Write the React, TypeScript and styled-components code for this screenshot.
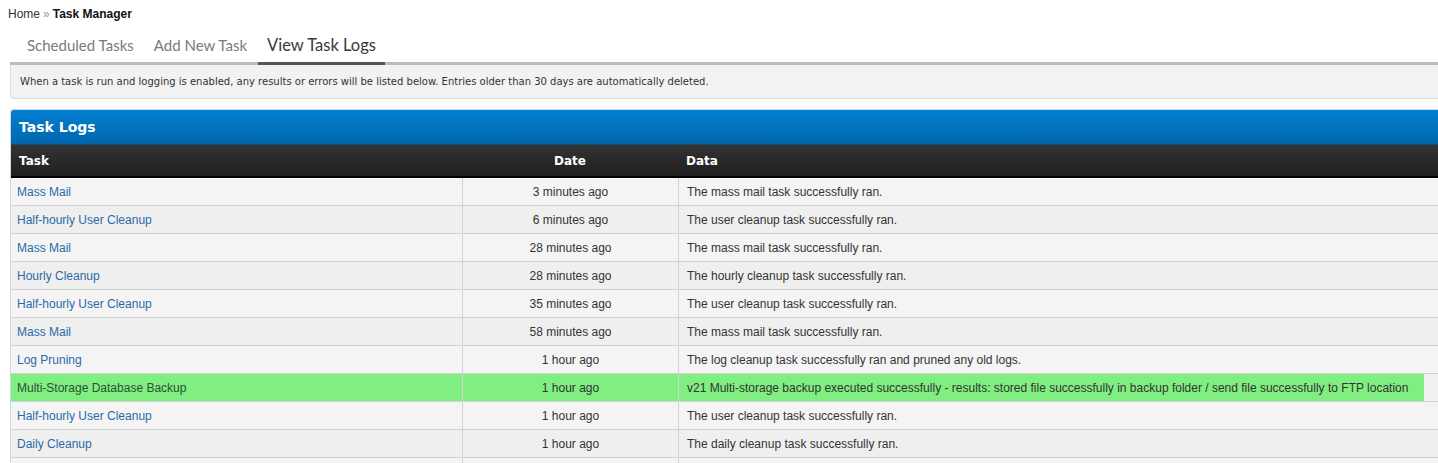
import React from "react";
import styled, { createGlobalStyle } from "styled-components";

const Global = createGlobalStyle`
  html, body { margin: 0; padding: 0; background: #fff; overflow: hidden; }
  body { font-family: "Liberation Sans", Arial, sans-serif; }
`;

const Page = styled.div`
  width: 1460px;
  padding: 7px 0 0 8px;
  box-sizing: border-box;
`;

const Breadcrumb = styled.div`
  font-size: 12px;
  color: #333;
  line-height: 15px;
  b { color: #111; }
`;

const Sep = styled.span`
  color: #999;
  margin: 0 3px;
`;

const Tabs = styled.div`
  display: flex;
  align-items: flex-end;
  margin: 12px 0 0 2px;
  border-bottom: 3px solid #bbb;
  padding-left: 8px;
`;

const Tab = styled.div<{ $active?: boolean }>`
  font-family: Lato, "Open Sans", sans-serif;
  font-size: ${(p) => (p.$active ? "16.5px" : "15px")};
  line-height: 20px;
  padding: 1px 9px 7px 9px;
  margin-right: 2px;
  color: ${(p) => (p.$active ? "#3a3a3a" : "#7a7a7a")};
  margin-bottom: -3px;
  border-bottom: 3px solid ${(p) => (p.$active ? "#555" : "transparent")};
`;

const Info = styled.div`
  margin: 0 0 10px 2px;
  height: 33px;
  background: #f2f2f2;
  border: 1px solid #dcdcdc;
  border-top: none;
  border-radius: 0 0 4px 4px;
  display: flex;
  align-items: center;
  padding-left: 9px;
  font-family: "DejaVu Sans", Verdana, sans-serif;
  font-size: 10px;
  color: #333;
`;

const Panel = styled.div`
  margin-left: 2px;
  border: 1px solid #c8d9e8;
  border-right: none;
  border-bottom: none;
  border-radius: 4px 0 0 0;
  overflow: hidden;
`;

const PanelTitle = styled.div`
  height: 34px;
  display: flex;
  align-items: center;
  padding-left: 8px;
  background: linear-gradient(#0180d2, #0166ad);
  border-bottom: 1px solid #1d4a66;
  color: #fff;
  font-family: "DejaVu Sans", Verdana, sans-serif;
  font-weight: bold;
  font-size: 14px;
`;

const Grid = styled.div`
  display: grid;
  grid-template-columns: 451px 216px 1fr;
`;

const HeadRow = styled(Grid)`
  height: 31px;
  background: linear-gradient(#333, #1f1f1f);
  border-bottom: 2px solid #000;
  color: #fff;
  font-family: "DejaVu Sans", Verdana, sans-serif;
  font-weight: bold;
  font-size: 12px;
`;

const HeadCell = styled.div<{ $center?: boolean }>`
  display: flex;
  align-items: center;
  justify-content: ${(p) => (p.$center ? "center" : "flex-start")};
  padding-left: ${(p) => (p.$center ? "0" : "8px")};
`;

const Row = styled(Grid)<{ $alt?: boolean; $hl?: boolean }>`
  height: 27px;
  border-bottom: 1px solid #d2d2d2;
  background: ${(p) =>
    p.$hl
      ? "linear-gradient(90deg, #80ee80 calc(100% - 36px), #f1f1f1 calc(100% - 36px))"
      : p.$alt
      ? "#efefef"
      : "#f4f4f4"};
  font-size: 12px;
  color: #333;
`;

const Cell = styled.div<{ $center?: boolean; $first?: boolean }>`
  display: flex;
  align-items: center;
  justify-content: ${(p) => (p.$center ? "center" : "flex-start")};
  padding-left: ${(p) => (p.$center ? "0" : p.$first ? "6px" : "8px")};
  border-left: ${(p) => (p.$first ? "none" : "1px solid #d2d2d2")};
  white-space: nowrap;
`;

const TaskLink = styled.a<{ $hl?: boolean }>`
  color: ${(p) => (p.$hl ? "#2f4f3a" : "#2a6aa8")};
  text-decoration: none;
`;

const rows = [
  ["Mass Mail", "3 minutes ago", "The mass mail task successfully ran."],
  ["Half-hourly User Cleanup", "6 minutes ago", "The user cleanup task successfully ran."],
  ["Mass Mail", "28 minutes ago", "The mass mail task successfully ran."],
  ["Hourly Cleanup", "28 minutes ago", "The hourly cleanup task successfully ran."],
  ["Half-hourly User Cleanup", "35 minutes ago", "The user cleanup task successfully ran."],
  ["Mass Mail", "58 minutes ago", "The mass mail task successfully ran."],
  ["Log Pruning", "1 hour ago", "The log cleanup task successfully ran and pruned any old logs."],
  [
    "Multi-Storage Database Backup",
    "1 hour ago",
    "v21 Multi-storage backup executed successfully - results: stored file successfully in backup folder / send file successfully to FTP location",
  ],
  ["Half-hourly User Cleanup", "1 hour ago", "The user cleanup task successfully ran."],
  ["Daily Cleanup", "1 hour ago", "The daily cleanup task successfully ran."],
  ["", "", ""],
];

export default function App() {
  return (
    <>
      <Global />
      <Page>
        <Breadcrumb>
          Home<Sep>»</Sep>
          <b>Task Manager</b>
        </Breadcrumb>
        <Tabs>
          <Tab>Scheduled Tasks</Tab>
          <Tab>Add New Task</Tab>
          <Tab $active>View Task Logs</Tab>
        </Tabs>
        <Info>
          When a task is run and logging is enabled, any results or errors will be listed below. Entries older than 30 days are automatically deleted.
        </Info>
        <Panel>
          <PanelTitle>Task Logs</PanelTitle>
          <HeadRow>
            <HeadCell>Task</HeadCell>
            <HeadCell $center>Date</HeadCell>
            <HeadCell>Data</HeadCell>
          </HeadRow>
          {rows.map((r, i) => {
            const hl = r[0] === "Multi-Storage Database Backup";
            return (
              <Row key={i} $alt={i % 2 === 1} $hl={hl}>
                <Cell $first>
                  {r[0] && (
                    <TaskLink href="#" $hl={hl}>
                      {r[0]}
                    </TaskLink>
                  )}
                </Cell>
                <Cell $center>{r[1]}</Cell>
                <Cell>{r[2]}</Cell>
              </Row>
            );
          })}
        </Panel>
      </Page>
    </>
  );
}
